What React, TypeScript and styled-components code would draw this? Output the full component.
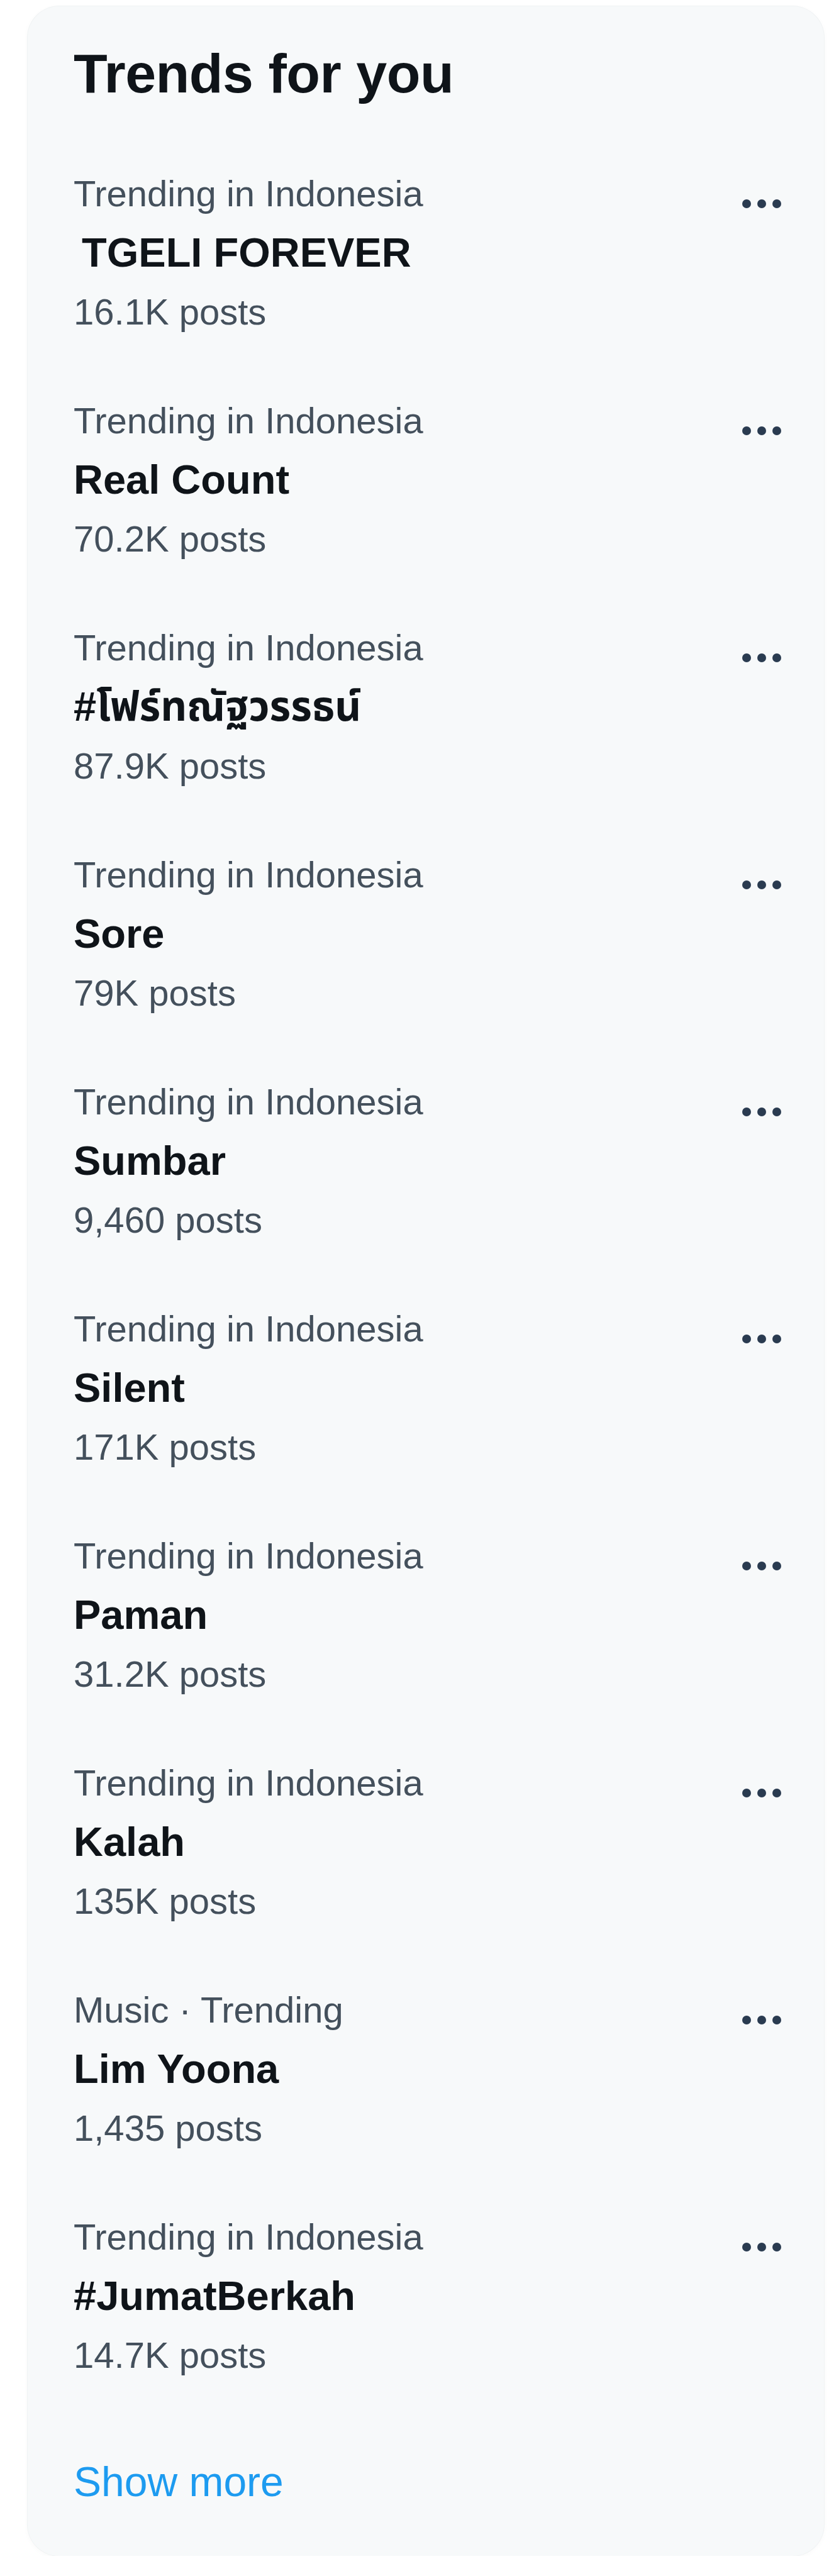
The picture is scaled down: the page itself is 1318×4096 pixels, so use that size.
import React from 'react';
import styled, { createGlobalStyle } from 'styled-components';

const GlobalStyle = createGlobalStyle`
  html, body {
    margin: 0;
    padding: 0;
    background: #ffffff;
  }
  body {
    font-family: "Liberation Sans", Arial, "Noto Sans", "Noto Sans Thai", sans-serif;
    -webkit-font-smoothing: antialiased;
  }
`;

interface Trend {
    context: string;
    name: string;
    posts: string;
}

const trends: Trend[] = [
    { context: 'Trending in Indonesia', name: '\u2009TGELI FOREVER', posts: '16.1K posts' },
    { context: 'Trending in Indonesia', name: 'Real Count', posts: '70.2K posts' },
    { context: 'Trending in Indonesia', name: '#โฟร์ทณัฐวรรธน์', posts: '87.9K posts' },
    { context: 'Trending in Indonesia', name: 'Sore', posts: '79K posts' },
    { context: 'Trending in Indonesia', name: 'Sumbar', posts: '9,460 posts' },
    { context: 'Trending in Indonesia', name: 'Silent', posts: '171K posts' },
    { context: 'Trending in Indonesia', name: 'Paman', posts: '31.2K posts' },
    { context: 'Trending in Indonesia', name: 'Kalah', posts: '135K posts' },
    { context: 'Music · Trending', name: 'Lim Yoona', posts: '1,435 posts' },
    { context: 'Trending in Indonesia', name: '#JumatBerkah', posts: '14.7K posts' },
];

const Page = styled.div`
  padding: 10px 8px 0 44px;
`;

const Card = styled.section`
  width: 1266px;
  box-sizing: border-box;
  background: #f7f9fa;
  border-radius: 50px;
  box-shadow: 0 0 0 1px #f0f3f4, 0 2px 10px rgba(0, 0, 0, 0.03);
  padding: 52px 0 71px;
  display: flex;
  flex-direction: column;
`;

const Header = styled.h2`
  margin: 0;
  padding: 0 73px 49px;
  font-size: 88px;
  line-height: 110px;
  font-weight: 700;
  color: #0f1419;
  letter-spacing: -0.5px;
`;

const List = styled.div`
  display: flex;
  flex-direction: column;
`;

const Item = styled.div`
  display: flex;
  align-items: flex-start;
  justify-content: space-between;
  padding: 40px 68px 39px 73px;
`;

const Texts = styled.div`
  display: flex;
  flex-direction: column;
  min-width: 0;
`;

const Context = styled.div`
  font-size: 58px;
  line-height: 94px;
  color: #44505c;
  white-space: nowrap;
`;

const Name = styled.div`
  font-size: 65px;
  line-height: 94px;
  font-weight: 700;
  color: #0f1419;
  white-space: nowrap;
  font-family: "Liberation Sans", Arial, "Noto Sans Thai", "Noto Sans", sans-serif;
`;

const Posts = styled.div`
  font-size: 58px;
  line-height: 94px;
  color: #44505c;
  white-space: nowrap;
`;

const MoreButton = styled.button`
  background: none;
  border: none;
  padding: 0;
  margin-top: 56px;
  width: 62px;
  height: 14px;
  display: flex;
  align-items: center;
  justify-content: center;
  cursor: pointer;
`;

const ShowMore = styled.a`
  display: block;
  padding: 68px 73px 0;
  font-size: 66px;
  line-height: 94px;
  color: #1d9bf0;
  text-decoration: none;
`;

const Dots: React.FC = () => (
    <svg width="62" height="14" viewBox="0 0 62 14">
        <circle cx="7" cy="7" r="7" fill="#2a3b50" />
        <circle cx="31" cy="7" r="7" fill="#2a3b50" />
        <circle cx="55" cy="7" r="7" fill="#2a3b50" />
    </svg>
);

export default function App() {
    return (
        <>
            <GlobalStyle />
            <Page>
                <Card>
                    <Header>Trends for you</Header>
                    <List>
                        {trends.map((t, i) => (
                            <Item key={i}>
                                <Texts>
                                    <Context>{t.context}</Context>
                                    <Name>{t.name}</Name>
                                    <Posts>{t.posts}</Posts>
                                </Texts>
                                <MoreButton aria-label="More">
                                    <Dots />
                                </MoreButton>
                            </Item>
                        ))}
                    </List>
                    <ShowMore href="#">Show more</ShowMore>
                </Card>
            </Page>
        </>
    );
}
